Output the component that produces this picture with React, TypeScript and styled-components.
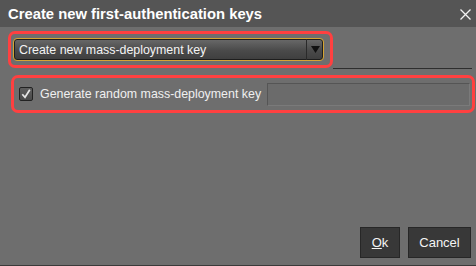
import styled, { createGlobalStyle } from "styled-components";

const GlobalStyle = createGlobalStyle`
  html, body {
    margin: 0;
    padding: 0;
    background: #6e6e6e;
  }
  body {
    font-family: "Liberation Sans", Arial, sans-serif;
  }
`;

function App() {
  return (
    <>
      <GlobalStyle />
      <Dialog>
        <TitleBar>
          <Title>Create new first-authentication keys</Title>
          <CloseIcon width="11" height="11" viewBox="0 0 11 11">
            <path d="M0.5 0.5 L10.5 10.5 M10.5 0.5 L0.5 10.5" stroke="#f2f2f2" strokeWidth="1.3" />
          </CloseIcon>
        </TitleBar>
        <Body>
          <ComboRow>
            <Highlight $pad="4px 6px 4px 2px">
              <Select>
                <SelectText>Create new mass-deployment key</SelectText>
                <SelectArrow>
                  <svg width="9" height="7" viewBox="0 0 9 7">
                    <path d="M0 0 H9 L4.5 7 Z" fill="#111" />
                  </svg>
                </SelectArrow>
              </Select>
            </Highlight>
            <Rule />
          </ComboRow>
          <Highlight $pad="0 2px 0 5px" $indent={3} $height={38} $width={464}>
            <CheckRow>
              <CheckBox>
                <svg width="12" height="12" viewBox="0 0 12 12">
                  <path d="M2.3 6.2 L5 9.3 L9.8 1.8" stroke="#e6e6e6" strokeWidth="1.7" fill="none" />
                </svg>
              </CheckBox>
              <Label>Generate random mass-deployment key</Label>
              <KeyField />
            </CheckRow>
          </Highlight>
        </Body>
        <Footer>
          <Button $width={40}>
            <u>O</u>k
          </Button>
          <Button $width={63}>Cancel</Button>
        </Footer>
      </Dialog>
    </>
  );
}

export default App;

const Dialog = styled.div`
  width: 476px;
  height: 266px;
  box-sizing: border-box;
  display: flex;
  flex-direction: column;
  background: #6e6e6e;
  border-bottom: 1px solid #3a3a3a;
  overflow: hidden;
`;

const TitleBar = styled.div`
  height: 27px;
  flex-shrink: 0;
  display: flex;
  align-items: center;
  justify-content: space-between;
  padding: 0 5px 0 8px;
  background: #555555;
`;

const Title = styled.div`
  color: #ffffff;
  font-size: 14.8px;
  font-weight: bold;
  padding-top: 1px;
`;

const CloseIcon = styled.svg`
  display: block;
  margin-top: 1px;
`;

const Body = styled.div`
  display: flex;
  flex-direction: column;
  gap: 6px;
  padding: 4px 0 0 8px;
`;

const ComboRow = styled.div`
  display: flex;
  align-items: flex-start;
  height: 38px;
`;

const Rule = styled.div`
  flex: 1;
  align-self: flex-end;
  height: 1px;
  margin-right: 4px;
  background: #2e2e2e;
`;

const Highlight = styled.div<{ $pad: string; $indent?: number; $height?: number; $width?: number }>`
  box-sizing: border-box;
  display: flex;
  align-items: center;
  padding: ${(p) => p.$pad};
  margin-left: ${(p) => p.$indent ?? 0}px;
  ${(p) => (p.$height ? `height: ${p.$height}px;` : "")}
  ${(p) => (p.$width ? `width: ${p.$width}px;` : "")}
  border: 3px solid #ff4040;
  border-radius: 7px;
`;

const Select = styled.div`
  box-sizing: border-box;
  width: 311px;
  height: 23px;
  display: flex;
  align-items: stretch;
  border: 1px solid #d6a532;
  border-radius: 4px;
  box-shadow: inset 0 0 0 1px #1e1e1e;
  background: linear-gradient(#6a6a6a, #4a4a4a 55%, #3e3e3e);
`;

const SelectText = styled.div`
  flex: 1;
  display: flex;
  align-items: center;
  padding-left: 5px;
  color: #f4f4f4;
  font-size: 12.4px;
`;

const SelectArrow = styled.div`
  width: 16px;
  display: flex;
  align-items: center;
  justify-content: center;
  border-left: 1px solid #2a2a2a;
`;

const CheckRow = styled.div`
  flex: 1;
  display: flex;
  align-items: center;
`;

const CheckBox = styled.div`
  box-sizing: border-box;
  width: 14px;
  height: 14px;
  display: flex;
  align-items: center;
  justify-content: center;
  border: 1px solid #222;
  border-radius: 2px;
  background: linear-gradient(#5e5e5e, #4a4a4a);
`;

const Label = styled.span`
  margin-left: 7px;
  color: #f0f0f0;
  font-size: 12.4px;
  white-space: nowrap;
`;

const KeyField = styled.div`
  box-sizing: border-box;
  margin-left: auto;
  width: 203px;
  height: 23px;
  background: #6b6b6b;
  border: 1px solid #7a7a7a;
  border-top-color: #555;
  border-left-color: #555;
`;

const Footer = styled.div`
  margin-top: auto;
  display: flex;
  justify-content: flex-end;
  gap: 8px;
  padding: 0 5px 7px 0;
`;

const Button = styled.button<{ $width: number }>`
  box-sizing: border-box;
  width: ${(p) => p.$width}px;
  height: 31px;
  padding: 0;
  background: #383838;
  border: 1px solid #272727;
  color: #f4f4f4;
  font-family: "Liberation Sans", Arial, sans-serif;
  font-size: 13px;

  u {
    text-decoration-thickness: 1px;
  }
`;
